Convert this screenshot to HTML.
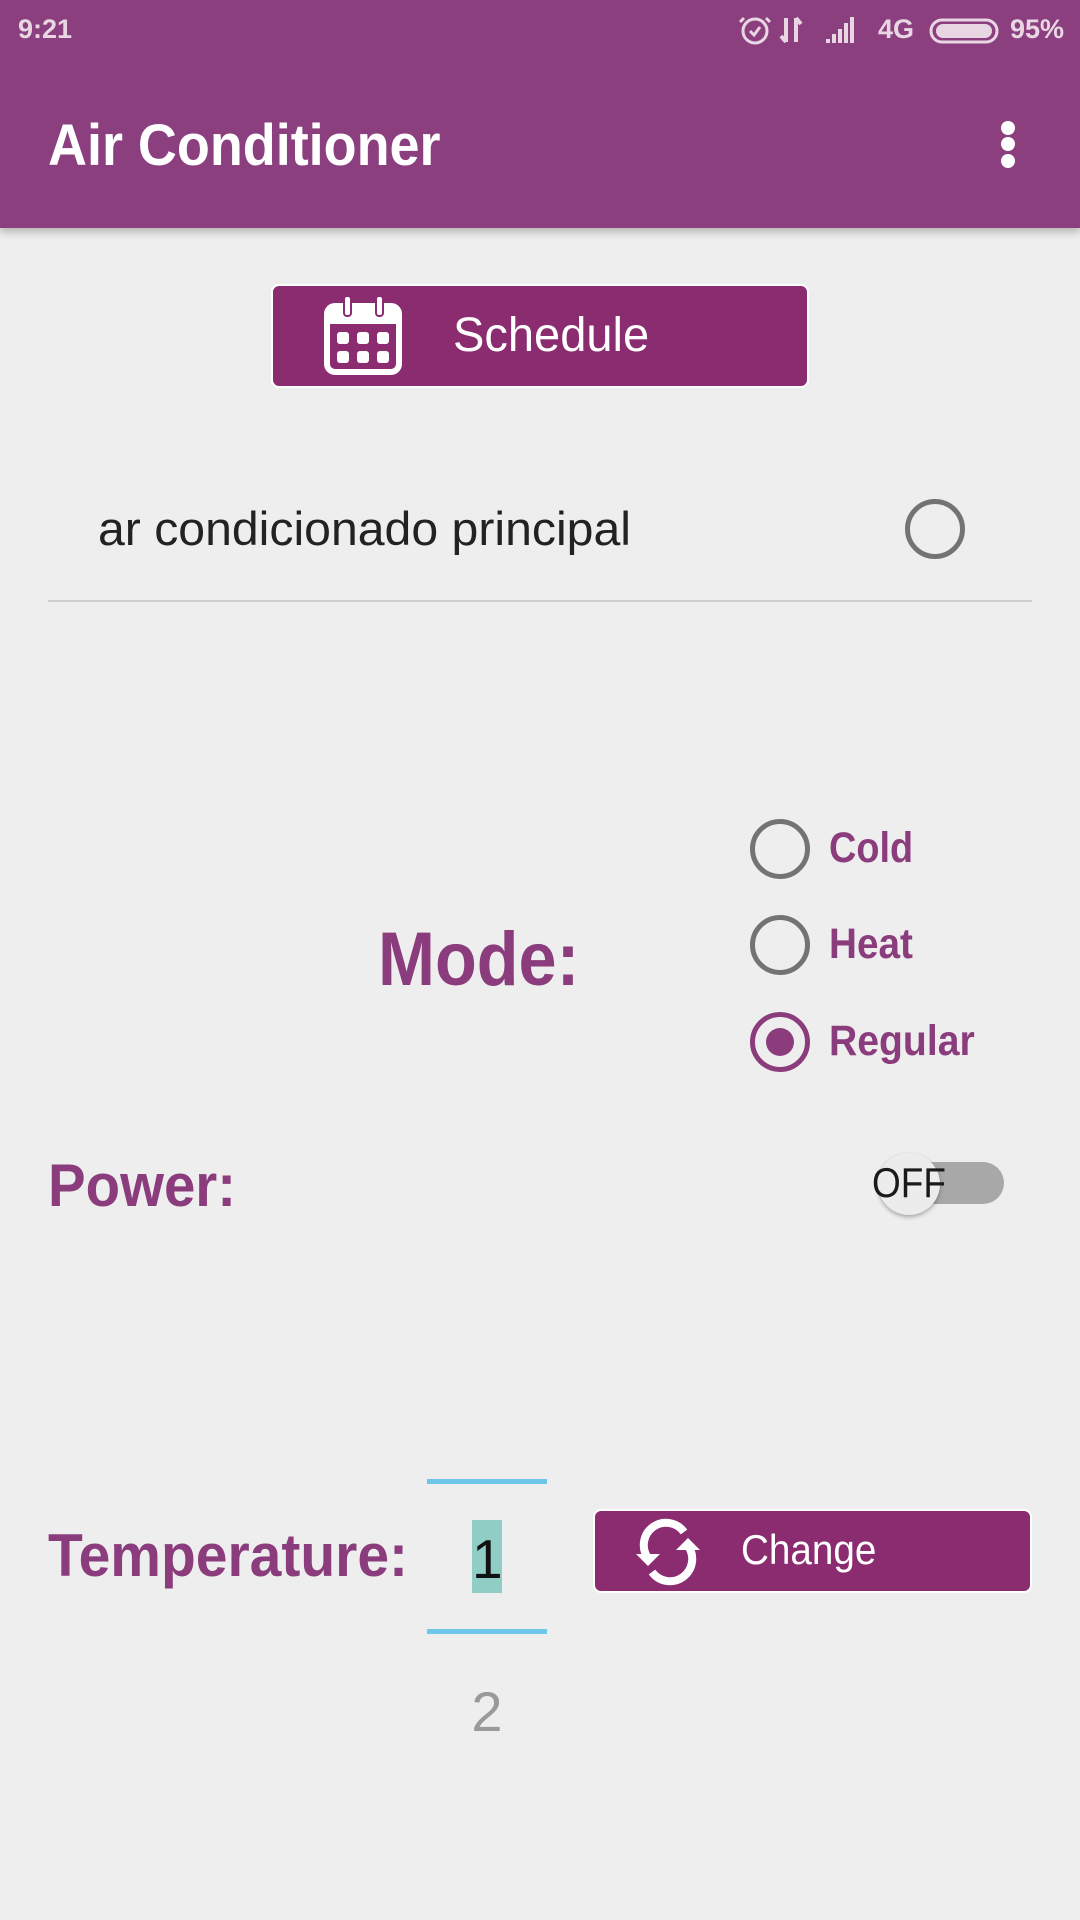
<!DOCTYPE html>
<html><head><meta charset="utf-8"><style>
*{margin:0;padding:0;box-sizing:border-box}
body{width:1080px;height:1920px;background:#eeeeee;font-family:"Liberation Sans",sans-serif;position:relative;overflow:hidden}
.a{position:absolute;white-space:nowrap;transform-origin:0 50%}
.p{color:#8b3c7c;font-weight:bold}
.rad{position:absolute;width:60px;height:60px;border-radius:50%;border:5px solid #737373}
</style></head><body>
<div class="a" style="left:0;top:0;width:1080px;height:228px;background:#8b3f7e;box-shadow:0 4px 8px rgba(0,0,0,.25)"></div>
<div class="a" style="left:18px;top:14px;font-size:27px;font-weight:bold;color:#e8d6e3">9:21</div>
<div class="a" style="left:878px;top:14px;font-size:27px;font-weight:bold;color:#e8d6e3">4G</div>
<div class="a" style="left:1010px;top:14px;font-size:27px;font-weight:bold;color:#e8d6e3">95%</div>
<svg class="a" style="left:730px;top:12px" width="270" height="36" viewBox="0 0 270 36">
<circle cx="25" cy="19" r="12" fill="none" stroke="#e8d6e3" stroke-width="3"/>
<path d="M20 19l4 4 6-8M14 6l-4 4M36 6l4 4" stroke="#e8d6e3" stroke-width="3" fill="none"/>
<path d="M56 6v24M51 24l5 6M66 30V6M66 6l5 6" stroke="#e8d6e3" stroke-width="4" fill="none"/>
<path d="M96 31h4v-4h-4zM102 31h4v-9h-4zM108 31h4v-14h-4zM114 31h4v-20h-4zM120 31h4v-26h-4z" fill="#e8d6e3"/>
<rect x="201" y="8" width="66" height="22" rx="11" fill="none" stroke="#e8d6e3" stroke-width="3"/>
<rect x="206" y="12" width="56" height="14" rx="7" fill="#e8d6e3"/>
</svg>
<div class="a" style="left:48px;top:112px;font-size:58px;font-weight:bold;color:#fff;transform:scaleX(0.93)">Air Conditioner</div>
<div class="a" style="left:1001px;top:121px;width:14px;height:14px;border-radius:50%;background:#fff"></div>
<div class="a" style="left:1001px;top:137px;width:14px;height:14px;border-radius:50%;background:#fff"></div>
<div class="a" style="left:1001px;top:154px;width:14px;height:14px;border-radius:50%;background:#fff"></div>

<div class="a" style="left:271px;top:284px;width:538px;height:104px;background:#8b2c70;border:2px solid #fff;border-radius:8px"></div>
<svg class="a" style="left:322px;top:292px" width="84" height="84" viewBox="0 0 84 84">
<rect x="5" y="14" width="72" height="66" rx="8" fill="none" stroke="#fff" stroke-width="6"/>
<rect x="5" y="14" width="72" height="18" fill="#fff"/>
<rect x="22" y="4" width="7" height="20" rx="3" fill="#fff" stroke="#8b2c70" stroke-width="2"/>
<rect x="54" y="4" width="7" height="20" rx="3" fill="#fff" stroke="#8b2c70" stroke-width="2"/>
<g fill="#fff"><rect x="15" y="40" width="12" height="12" rx="3"/><rect x="35" y="40" width="12" height="12" rx="3"/><rect x="55" y="40" width="12" height="12" rx="3"/><rect x="15" y="59" width="12" height="12" rx="3"/><rect x="35" y="59" width="12" height="12" rx="3"/><rect x="55" y="59" width="12" height="12" rx="3"/></g>
</svg>
<div class="a" style="left:453px;top:308px;font-size:48px;color:#fff;transform:scaleX(0.98)">Schedule</div>

<div class="a" style="left:98px;top:501px;font-size:47px;color:#222;transform:scaleX(1.025)">ar condicionado principal</div>
<div class="rad" style="left:905px;top:499px"></div>
<div class="a" style="left:48px;top:600px;width:984px;height:2px;background:#d0d0d0"></div>

<div class="a p" style="left:378px;top:916px;font-size:76px;transform:scaleX(0.9)">Mode:</div>
<div class="rad" style="left:750px;top:819px"></div>
<div class="rad" style="left:750px;top:915px"></div>
<div class="rad" style="left:750px;top:1012px;border-color:#8b3c7c"></div>
<div class="a" style="left:766px;top:1028px;width:28px;height:28px;border-radius:50%;background:#8b3c7c"></div>
<div class="a p" style="left:829px;top:824px;font-size:43px;transform:scaleX(0.88)">Cold</div>
<div class="a p" style="left:829px;top:920px;font-size:43px;transform:scaleX(0.9)">Heat</div>
<div class="a p" style="left:829px;top:1017px;font-size:43px;transform:scaleX(0.91)">Regular</div>

<div class="a p" style="left:48px;top:1151px;font-size:60px;transform:scaleX(0.94)">Power:</div>
<div class="a" style="left:906px;top:1162px;width:98px;height:42px;border-radius:21px;background:#a8a8a8"></div>
<div class="a" style="left:878px;top:1153px;width:62px;height:62px;border-radius:50%;background:#ececec;box-shadow:0 2px 4px rgba(0,0,0,.3)"></div>
<div class="a" style="left:872px;top:1159px;font-size:42px;color:#1a1a1a;transform:scaleX(0.88)">OFF</div>

<div class="a p" style="left:48px;top:1521px;font-size:60px;transform:scaleX(0.95)">Temperature:</div>
<div class="a" style="left:427px;top:1479px;width:120px;height:5px;background:#6ec6e8"></div>
<div class="a" style="left:427px;top:1629px;width:120px;height:5px;background:#6ec6e8"></div>
<div class="a" style="left:472px;top:1520px;width:30px;height:73px;background:#8fcdc5"></div>
<div class="a" style="left:472px;top:1527px;width:30px;text-align:center;font-size:55px;color:#111">1</div>
<div class="a" style="left:457px;top:1679px;width:60px;text-align:center;font-size:56px;color:#9a9a9a">2</div>

<div class="a" style="left:593px;top:1509px;width:439px;height:84px;background:#8b2c70;border:2px solid #fff;border-radius:8px"></div>
<svg class="a" style="left:634px;top:1518px" width="68" height="68" viewBox="0 0 68 68">
<path d="M14 40A22 22 0 0 1 50 14" fill="none" stroke="#fff" stroke-width="8"/>
<path d="M54 28A22 22 0 0 1 18 54" fill="none" stroke="#fff" stroke-width="8"/>
<path d="M2 36l12 12 12-12z" fill="#fff"/><path d="M42 32l12-12 12 12z" fill="#fff"/>
</svg>
<div class="a" style="left:741px;top:1526px;font-size:42px;color:#fff;transform:scaleX(0.92)">Change</div>
</body></html>
